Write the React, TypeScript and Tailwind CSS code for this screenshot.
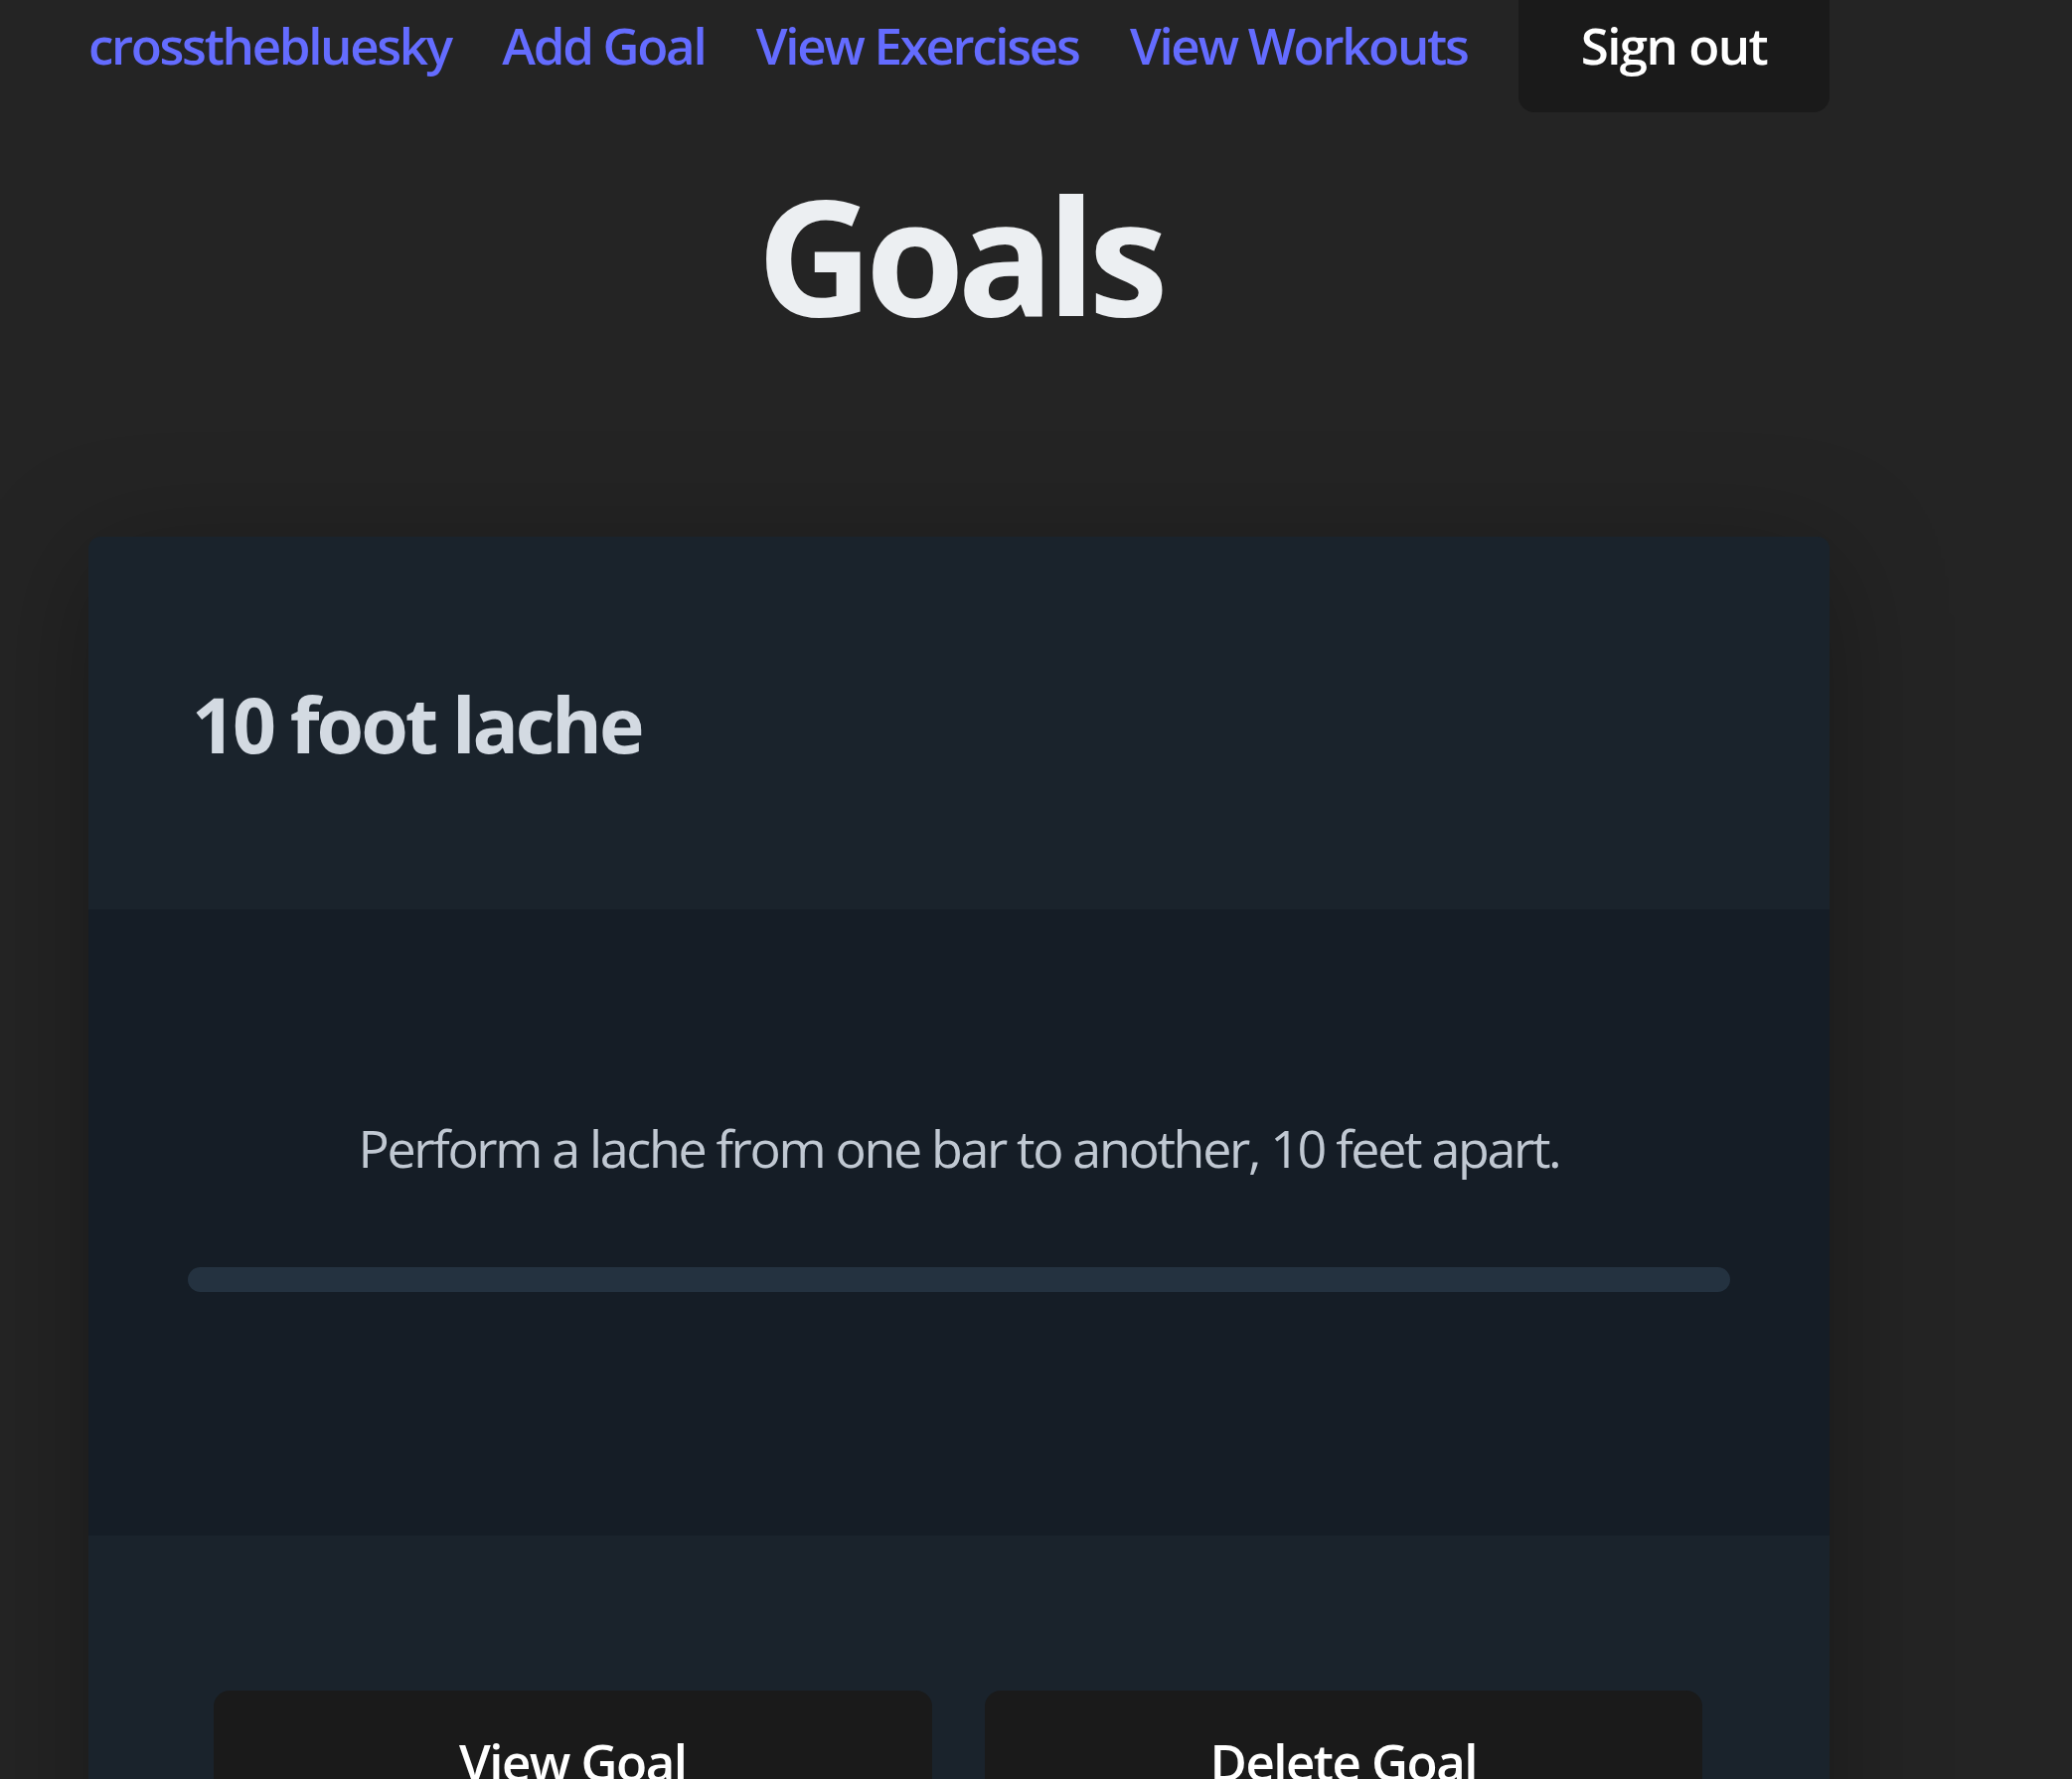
import React from "react";

const font = { fontFamily: '"Open Sans", "Noto Sans", sans-serif' };

export default function App() {
  return (
    <div className="min-h-screen bg-[#242424] overflow-hidden" style={font}>
      <div className="ml-[89px] w-[1752px]">
        <nav className="flex items-start justify-between h-[113px]">
          {["crosstheblue sky".replace(" ", ""), "Add Goal", "View Exercises", "View Workouts"].map((t) => (
            <a
              key={t}
              href="#"
              className="block pt-[7px] text-[51px] leading-normal font-semibold text-[#646cff] tracking-[-0.045em]"
            >
              {t}
            </a>
          ))}
          <button className="h-[113px] w-[313px] pt-[7px] rounded-b-[16px] bg-[#1a1a1a] text-[51px] leading-normal font-semibold text-white flex justify-center items-start tracking-[-0.03em]">
            Sign out
          </button>
        </nav>
        <h1 className="mt-[62px] text-center text-[161px] leading-none font-bold text-[#eceff2] tracking-[-0.045em]">
          Goals
        </h1>
        <div className="mt-[204px] rounded-[12px] overflow-hidden shadow-[0_20px_120px_rgba(0,0,0,0.3)]">
          <div className="h-[375px] bg-[#1a232c] pt-[150px] pl-[104px]">
            <h2 className="text-[77px] leading-none font-bold text-[#d3dae2] tracking-[-0.04em]">10 foot lache</h2>
          </div>
          <div className="h-[630px] bg-[#151d26] pt-[214px] px-[100px]">
            <p className="text-center text-[52px] leading-none font-normal text-[#c0c8d2] tracking-[-0.045em]">
              Perform a lache from one bar to another, 10 feet apart.
            </p>
            <div className="mt-[94px] h-[25px] rounded-full bg-[#243240]" />
          </div>
          <div className="h-[400px] bg-[#1a232c] pt-[156px] pl-[126px] pr-[128px] flex gap-[53px] items-start">
            <button className="flex-1 h-[200px] rounded-[16px] bg-[#1a1a1a] pt-[33px] text-[51px] leading-normal font-semibold text-white flex justify-center items-start tracking-[-0.03em]">
              View Goal
            </button>
            <button className="flex-1 h-[200px] rounded-[16px] bg-[#1a1a1a] pt-[33px] text-[51px] leading-normal font-semibold text-white flex justify-center items-start tracking-[-0.03em]">
              Delete Goal
            </button>
          </div>
        </div>
      </div>
    </div>
  );
}
